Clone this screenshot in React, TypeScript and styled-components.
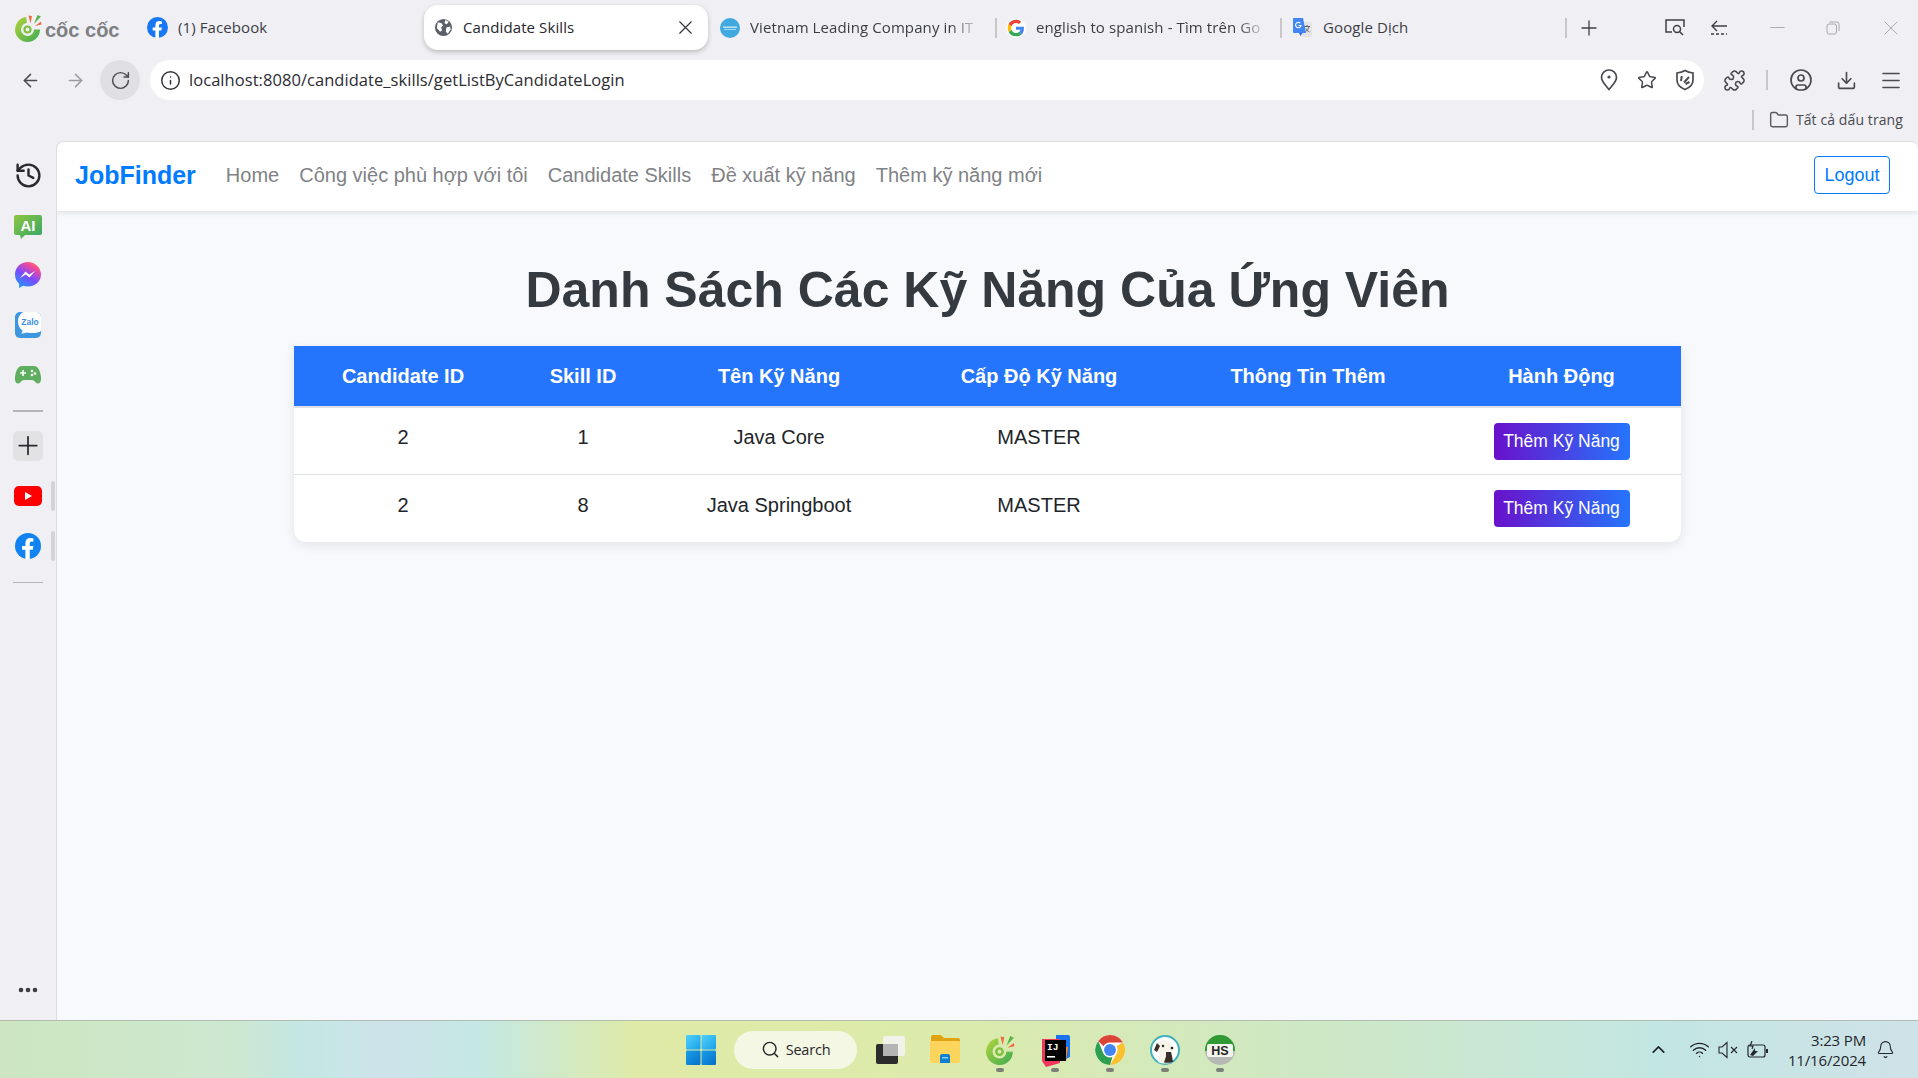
import React from "react";
import styled, { createGlobalStyle } from "styled-components";
import {
  ArrowLeft, ArrowRight, RotateCw, Info, Star, Puzzle, CircleUser, Download, Menu, Folder,
  Plus, X, Minus, History, Search, ChevronUp, Wifi, Bell, MoreHorizontal,
} from "lucide-react";

const GlobalStyle = createGlobalStyle`
  html, body { margin: 0; padding: 0; height: 100%; overflow: hidden; }
  body { font-family: "Liberation Sans", Arial, sans-serif; background: #efeff4; }
  * { box-sizing: border-box; }
`;

const chromeFont = `"Open Sans", "Noto Sans", sans-serif`;

const Screen = styled.div`
  width: 1918px;
  height: 1078px;
  display: flex;
  flex-direction: column;
  background: #efeff4;
  overflow: hidden;
`;

/* ---------- browser tab strip ---------- */
const TabStrip = styled.div`
  height: 55px;
  flex: none;
  display: flex;
  align-items: center;
  padding: 0 0 0 14px;
  font-family: ${chromeFont};
  font-size: 15px;
  letter-spacing: 0.1px;
  color: #3c3c44;
`;
const Brand = styled.div`
  width: 110px;
  display: flex;
  align-items: center;
  gap: 3px;
  flex: none;
`;
const BrandText = styled.span`
  font-family: "Liberation Sans", sans-serif;
  font-weight: 700;
  font-size: 20px;
  letter-spacing: 0;
  color: #7d7f82;
  white-space: nowrap;
  margin-top: 6px;
`;
const Tab = styled.div<{ $w: number; $ml?: number }>`
  width: ${(p) => p.$w}px;
  margin-left: ${(p) => p.$ml ?? 0}px;
  flex: none;
  height: 45px;
  display: flex;
  align-items: center;
  gap: 10px;
  white-space: nowrap;
`;
const ActiveTab = styled(Tab)`
  background: #fff;
  border-radius: 14px;
  padding: 0 11px 0 10px;
  color: #26262c;
  box-shadow: 0 2px 5px rgba(0, 0, 0, 0.22);
`;
const TabTitle = styled.span<{ $fade?: boolean }>`
  flex: ${(p) => (p.$fade ? "none" : 1)};
  margin-bottom: 2px;
  ${(p) =>
    p.$fade &&
    `-webkit-mask-image: linear-gradient(to right, #000 90%, rgba(0,0,0,0.25) 100%);
     mask-image: linear-gradient(to right, #000 90%, rgba(0,0,0,0.25) 100%);`}
`;
const TabSeparator = styled.div<{ $ml: number }>`
  width: 2px;
  height: 20px;
  flex: none;
  margin-left: ${(p) => p.$ml}px;
  background: #c6c6cb;
`;
const StripButton = styled.div<{ $ml: number; $dim?: boolean }>`
  width: 24px;
  height: 24px;
  flex: none;
  margin-left: ${(p) => p.$ml}px;
  display: flex;
  align-items: center;
  justify-content: center;
  color: ${(p) => (p.$dim ? "#a9a9ae" : "#3f3f46")};
`;

/* ---------- address toolbar ---------- */
const Toolbar = styled.div`
  height: 45px;
  flex: none;
  display: flex;
  align-items: flex-start;
  padding: 5px 0 0 10px;
`;
const NavButton = styled.div<{ $hover?: boolean; $muted?: boolean }>`
  width: 40px;
  height: 40px;
  margin-right: ${(p) => (p.$hover ? 10 : 5)}px;
  flex: none;
  display: flex;
  align-items: center;
  justify-content: center;
  border-radius: 50%;
  background: ${(p) => (p.$hover ? "#e0e0e4" : "transparent")};
  color: ${(p) => (p.$muted ? "#9a9aa0" : "#4a4a50")};
`;
const AddressBar = styled.div`
  width: 1554px;
  height: 40px;
  flex: none;
  display: flex;
  align-items: center;
  background: #fff;
  border-radius: 20px;
  padding: 0 0 0 10px;
  color: #33333a;
`;
const UrlText = styled.span`
  flex: 1;
  margin: 0 0 2px 8px;
  font-family: ${chromeFont};
  font-size: 16.5px;
  letter-spacing: 0.05px;
  color: #2c2c32;
`;
const BarIcon = styled.div<{ $w?: number }>`
  width: ${(p) => p.$w ?? 38}px;
  height: 40px;
  flex: none;
  display: flex;
  align-items: center;
  justify-content: center;
  color: #4a4a50;
`;
const ToolbarActions = styled.div`
  display: flex;
  align-items: center;
  height: 40px;
  margin-left: 11px;
`;
const ToolbarDivider = styled.div`
  width: 2px;
  height: 20px;
  background: #c6c6cb;
  margin: 0 21px 0 13px;
`;

/* ---------- bookmarks row ---------- */
const BookmarkRow = styled.div`
  height: 41px;
  flex: none;
  display: flex;
  align-items: center;
  justify-content: flex-end;
  padding: 0 15px 2px 0;
  gap: 7px;
  font-family: ${chromeFont};
  font-size: 14px;
  letter-spacing: 0.1px;
  color: #4a4a50;
`;
const BookmarkDivider = styled.div`
  width: 2px;
  height: 20px;
  background: #c6c6cb;
  margin-right: 8px;
`;

/* ---------- body ---------- */
const Main = styled.div`
  flex: 1;
  min-height: 0;
  display: flex;
`;
const Sidebar = styled.div`
  width: 56px;
  flex: none;
  display: flex;
  flex-direction: column;
  padding-top: 9px;
`;
const SideSlot = styled.div`
  position: relative;
  width: 56px;
  height: 50px;
  flex: none;
  display: flex;
  align-items: center;
  justify-content: center;
`;
const SidePip = styled.div`
  position: absolute;
  left: 51px;
  top: 10px;
  width: 4px;
  height: 30px;
  background: #d4d4d8;
  border-radius: 2px;
`;
const SideRule = styled.div<{ $mt: number; $mb: number }>`
  width: 30px;
  height: 1.5px;
  background: #b5b5b9;
  margin: ${(p) => p.$mt}px 0 ${(p) => p.$mb}px 13px;
  flex: none;
`;
const PlusBox = styled.div`
  width: 30px;
  height: 30px;
  border-radius: 5px;
  background: #e2e2e4;
  display: flex;
  align-items: center;
  justify-content: center;
  color: #2a2a2e;
`;
const SideBottom = styled.div`
  margin-top: auto;
  height: 50px;
  display: flex;
  align-items: center;
  justify-content: center;
  padding-bottom: 10px;
  color: #38383e;
`;
const Page = styled.div`
  flex: 1;
  min-width: 0;
  background: #f8f9fc;
  border-left: 1px solid #dcdce0;
  border-top: 1px solid #dcdce0;
  border-top-left-radius: 8px;
  border-top-right-radius: 8px;
  display: flex;
  flex-direction: column;
  overflow: hidden;
`;
const Navbar = styled.nav`
  height: 69px;
  flex: none;
  background: #fff;
  display: flex;
  align-items: center;
  padding: 0 28px 3px 18px;
  box-shadow: 0 2px 5px rgba(0, 0, 0, 0.1);
`;
const Logo = styled.a`
  font-size: 25px;
  font-weight: 700;
  color: #007bff;
  margin-right: 20px;
`;
const NavLink = styled.a`
  font-size: 20px;
  color: #808285;
  padding: 0 10px;
  white-space: nowrap;
`;
const LogoutButton = styled.button`
  margin-left: auto;
  width: 76px;
  height: 38px;
  background: #fff;
  border: 1px solid #007bff;
  border-radius: 4px;
  font: inherit;
  font-size: 18px;
  color: #007bff;
  padding: 0;
`;
const Content = styled.div`
  flex: 1;
  display: flex;
  flex-direction: column;
  align-items: center;
  padding: 50px 237px 0;
`;
const Title = styled.h1`
  margin: 0 0 27px;
  width: 100%;
  text-align: center;
  font-size: 50px;
  line-height: 58px;
  font-weight: 700;
  color: #343a40;
`;
const SkillsTable = styled.table`
  width: 1387px;
  table-layout: fixed;
  border-collapse: separate;
  border-spacing: 0;
  background: #fff;
  border-radius: 0 0 12px 12px;
  box-shadow: 0 3px 12px rgba(0, 0, 0, 0.09);
  text-align: center;
`;
const HeadCell = styled.th`
  height: 62px;
  background: #2575fc;
  border-bottom: 2px solid #dee2e6;
  color: #fff;
  font-size: 20px;
  font-weight: 700;
  padding: 0;
`;
const BodyCell = styled.td<{ $last?: boolean }>`
  height: 67px;
  border-bottom: ${(p) => (p.$last ? "none" : "1px solid #dee2e6")};
  font-size: 20px;
  color: #212529;
  padding: 0 0 7px;
  vertical-align: middle;
`;
const AddSkillButton = styled.button`
  width: 136px;
  height: 37px;
  margin-top: 7px;
  border: none;
  border-radius: 4px;
  background: linear-gradient(to right, #6a11cb, #2575fc);
  color: #fff;
  font: inherit;
  font-size: 17.5px;
  padding: 0;
`;

/* ---------- windows taskbar ---------- */
const Taskbar = styled.div`
  height: 58px;
  flex: none;
  display: flex;
  align-items: center;
  padding: 0 14px 0 686px;
  border-top: 1px solid #b1bdb0;
  background: linear-gradient(
    to right,
    #cde6c0 0,
    #cde8d0 230px,
    #c4e7e4 300px,
    #cde3ea 390px,
    #c4e8e4 480px,
    #dfeaa6 640px,
    #dcebac 950px,
    #cfe8c4 1300px,
    #c2e6e2 1660px,
    #cfe2e8 1918px
  );
`;
const StartButton = styled.div`
  width: 30px;
  height: 30px;
  flex: none;
`;
const SearchPill = styled.div`
  width: 123px;
  height: 38px;
  margin: 0 18px 0 18px;
  flex: none;
  border-radius: 19px;
  background: #f3f7e4;
  display: flex;
  align-items: center;
  justify-content: center;
  gap: 6px;
  font-family: ${chromeFont};
  font-size: 14.5px;
  letter-spacing: -0.2px;
  color: #27272b;
`;
const TaskIcon = styled.div<{ $running?: boolean }>`
  position: relative;
  width: 30px;
  height: 30px;
  margin-right: 25px;
  flex: none;
  &::after {
    content: "";
    display: ${(p) => (p.$running ? "block" : "none")};
    position: absolute;
    left: 11px;
    bottom: -7px;
    width: 8px;
    height: 4px;
    border-radius: 2px;
    background: #7b8078;
  }
`;
const Tray = styled.div`
  margin-left: auto;
  display: flex;
  align-items: center;
  color: #23262a;
`;
const TrayIcon = styled.div<{ $w: number; $ml?: number }>`
  width: ${(p) => p.$w}px;
  margin-left: ${(p) => p.$ml ?? 0}px;
  display: flex;
  align-items: center;
  justify-content: center;
`;
const Clock = styled.div`
  width: 92px;
  text-align: right;
  font-family: ${chromeFont};
  font-size: 15px;
  line-height: 20px;
  letter-spacing: -0.15px;
  color: #23262a;
`;

/* ---------- drawn logos ---------- */
const CocCocMark = ({ size = 28, id = "cc" }: { size?: number; id?: string }) => (
  <svg width={size} height={size} viewBox="0 0 28 28">
    <defs>
      <linearGradient id={id} x1="0" y1="0" x2="1" y2="1" gradientUnits="objectBoundingBox">
        <stop offset="0" stopColor="#a6cf3d" />
        <stop offset="1" stopColor="#4cb050" />
      </linearGradient>
    </defs>
    <path d="M23 15.500A9.500 9.500 0 1 1 12.500 6" fill="none" stroke={`url(#${id})`} strokeWidth="6" />
    <circle cx="13.500" cy="15.500" r="3" fill="none" stroke="#7fbf3f" strokeWidth="2.200" />
    <path d="M14.500 1.500l3.500.5-1.500 7.500z" fill="#f26b3a" />
    <path d="M23.500 1l3.500 1.500-7 7.500z" fill="#5bb649" />
    <path d="M27 7.500l.5 3-6.500 1.500z" fill="#f26b3a" />
  </svg>
);
const FacebookMark = ({ size = 22, c = "#1877f2" }: { size?: number; c?: string }) => (
  <svg width={size} height={size} viewBox="0 0 24 24">
    <circle cx="12" cy="12" r="12" fill={c} />
    <path d="M16.400 15.400l.6-3.400h-3.400V9.800c0-1 .5-1.900 2-1.900H17V5c-.9-.2-1.900-.3-2.800-.3-2.900 0-4.600 1.700-4.600 4.700V12H6.500v3.400h3.100V24h4v-8.600z" fill="#fff" />
  </svg>
);
const GlobeMark = () => (
  <svg width="19" height="19" viewBox="0 0 20 20">
    <circle cx="10" cy="10" r="9" fill="#5a5f68" />
    <path d="M4 4.500l4 1 1.500 2.500-2 2 1 3-2 1.500-3.500-4zM12 2l3.500 2-2 2.500-2.500-1zM13 10l4-1 .5 3-3 4.500-2-2z" fill="#fff" />
  </svg>
);
const VietnamMark = () => (
  <svg width="20" height="20" viewBox="0 0 20 20">
    <circle cx="10" cy="10" r="10" fill="#3fa9e0" />
    <rect x="3" y="8.500" width="14" height="1.500" fill="#bfe3f5" />
    <rect x="4" y="11" width="12" height="1" fill="#a5d6f0" />
  </svg>
);
const GoogleMark = () => (
  <svg width="20" height="20" viewBox="0 0 48 48">
    <circle cx="24" cy="24" r="24" fill="#fff" />
    <path fill="#4285f4" d="M43 24.500c0-1.500-.1-2.600-.4-3.800H24v7.300h10.800c-.5 2.600-2 4.700-4.300 6.200l6.600 5.100C41 36.700 43 31.100 43 24.500z" />
    <path fill="#34a853" d="M24 44c5.400 0 9.900-1.800 13.100-4.700l-6.600-5.100c-1.700 1.200-4 2-6.500 2-5.100 0-9.500-3.400-11-8.100l-6.800 5.300C9.500 39.700 16.200 44 24 44z" />
    <path fill="#fbbc05" d="M13 28.100c-.4-1.200-.6-2.600-.6-4.100s.2-2.900.6-4.100l-6.800-5.300C4.800 17.400 4 20.600 4 24s.8 6.600 2.200 9.400z" />
    <path fill="#ea4335" d="M24 11.800c3.100 0 5.300 1.300 6.900 2.800l5.700-5.600C33.900 6.100 29.400 4 24 4 16.200 4 9.500 8.300 6.200 14.600l6.800 5.300c1.500-4.700 5.900-8.100 11-8.100z" />
  </svg>
);
const TranslateMark = () => (
  <svg width="21" height="21" viewBox="0 0 21 21">
    <path d="M8 5h11a1 1 0 0 1 1 1v13a1 1 0 0 1-1 1H10z" fill="#e4e4e6" />
    <path d="M12 9.500h6M15 8v1.500M13 15c2-1 3.500-3 4-5.500M14 11.500c.6 1.400 1.800 2.800 3.500 3.500" stroke="#5f6368" strokeWidth="1" fill="none" />
    <path d="M1 1h10l3 15H2a1 1 0 0 1-1-1z" fill="#4285f4" />
    <path d="M8.300 6.200A2.700 2.700 0 1 0 9 8.500H6.600" stroke="#fff" strokeWidth="1.200" fill="none" />
    <path d="M7 16l1.500 3 2-3z" fill="#3367d6" />
  </svg>
);
const ScreenSearchIcon = () => (
  <svg width="22" height="20" viewBox="0 0 22 20" fill="none" stroke="#3f3f46" strokeWidth="1.500">
    <path d="M8 14H2V2h18v7" />
    <circle cx="13" cy="11" r="3.500" />
    <path d="M15.500 13.500L19 17" />
  </svg>
);
const TabBackIcon = () => (
  <svg width="18" height="18" viewBox="0 0 18 18" fill="none" stroke="#3f3f46" strokeWidth="1.400">
    <path d="M17 7H2M7 2L2 7l5 5" />
    <path d="M1 15h16" strokeDasharray="3 2" />
  </svg>
);
const RestoreIcon = () => (
  <svg width="14" height="14" viewBox="0 0 14 14" fill="none" stroke="#a9a9ae" strokeWidth="1">
    <rect x="1" y="3" width="9.500" height="10" rx="2" />
    <path d="M3.500 1h7.500a2 2 0 0 1 2 2v7" />
  </svg>
);
const ShieldIcon = () => (
  <svg width="20" height="22" viewBox="0 0 20 22" fill="none" stroke="#4a4a50" strokeWidth="1.700">
    <path d="M10 1.500c2.500 1.500 5 2.200 8 2.500v7c0 4.500-3.500 7.800-8 9.500-4.500-1.700-8-5-8-9.500V4c3-.3 5.500-1 8-2.500z" />
    <path d="M6 12l.8-5M9 13.500l5-5.500M10.500 15l4-2" strokeWidth="2" />
  </svg>
);
const PinIcon = () => (
  <svg width="18" height="22" viewBox="0 0 18 22" fill="none" stroke="#4a4a50" strokeWidth="1.700">
    <path d="M9 20.500C5 15.500 1.500 12.500 1.500 8.500a7.500 7.500 0 0 1 15 0c0 4-3.500 7-7.500 12z" />
    <circle cx="9" cy="8" r="1.600" fill="#4a4a50" stroke="none" />
  </svg>
);
const AiMark = () => (
  <svg width="28" height="28" viewBox="0 -4 28 28">
    <defs>
      <linearGradient id="ai" x1="0" y1="0" x2="1" y2="1">
        <stop offset="0" stopColor="#8fc540" />
        <stop offset="1" stopColor="#32a56a" />
      </linearGradient>
    </defs>
    <path d="M2 0h24a2 2 0 0 1 2 2v16a2 2 0 0 1-2 2H11l-4 4-1-4H2a2 2 0 0 1-2-2V2a2 2 0 0 1 2-2z" fill="url(#ai)" />
    <text x="14" y="15.500" textAnchor="middle" fontFamily="Liberation Sans" fontWeight="700" fontSize="15" fill="#fff">AI</text>
  </svg>
);
const MessengerMark = () => (
  <svg width="26" height="26" viewBox="0 0 26 26">
    <defs>
      <linearGradient id="ms" x1="0.2" y1="1" x2="0.8" y2="0">
        <stop offset="0" stopColor="#1a9bff" />
        <stop offset="0.45" stopColor="#7a4bff" />
        <stop offset="0.8" stopColor="#f0489c" />
        <stop offset="1" stopColor="#ff7a5c" />
      </linearGradient>
    </defs>
    <path d="M13 0C5.700 0 0 5.300 0 12.500c0 3.800 1.600 7 4.100 9.200V26l4-2.200c1.500.5 3.100.7 4.900.7 7.300 0 13-5.300 13-12S20.300 0 13 0z" fill="url(#ms)" />
    <path d="M5 16l5.500-6.500 3.700 3 5.800-3.500-5.500 6.500-3.700-3z" fill="#fff" />
  </svg>
);
const ZaloMark = () => (
  <svg width="26" height="26" viewBox="0 0 26 26">
    <rect width="26" height="26" rx="5" fill="#3d96e0" />
    <path d="M8 0h13a5 5 0 0 1 5 5v14c-2 1.500-5 2-8 2-3 0-5 0-7-.5-1 .8-3 1-5 1 .8-.8 1.500-2 1.500-3C4 16 3 12 3 9c0-4 2-7 5-9z" fill="#fff" />
    <text x="15" y="13" textAnchor="middle" fontFamily="Liberation Sans" fontWeight="700" fontSize="8.500" fill="#3d8fdc">Zalo</text>
  </svg>
);
const GameMark = () => (
  <svg width="26" height="18" viewBox="0 0 26 18">
    <path d="M7 0h12c4 0 6 4 7 11 .4 4-.8 6.500-3 6.500-2.400 0-3.500-3.500-6-3.500H9c-2.500 0-3.600 3.500-6 3.500C.8 17.500-.4 15 0 11 1 4 3 0 7 0z" fill="#5fae5f" />
    <path d="M5 7h6M8 4v6" stroke="#fff" strokeWidth="1.600" />
    <circle cx="17" cy="5" r="1.300" fill="#fff" />
    <circle cx="20" cy="7.500" r="1.300" fill="#fff" />
    <circle cx="17" cy="9" r="1.300" fill="#fff" />
  </svg>
);
const YoutubeMark = () => (
  <svg width="28" height="20" viewBox="0 0 28 20">
    <rect width="28" height="20" rx="5" fill="#f00" />
    <path d="M11 6l7 4-7 4z" fill="#fff" />
  </svg>
);
const WindowsMark = () => (
  <svg width="30" height="30" viewBox="0 0 30 30">
    <defs>
      <linearGradient id="w1" x1="0" y1="0" x2="1" y2="1">
        <stop offset="0" stopColor="#52d1fb" />
        <stop offset="1" stopColor="#1a9fe8" />
      </linearGradient>
      <linearGradient id="w2" x1="0" y1="0" x2="1" y2="1">
        <stop offset="0" stopColor="#1a9fe8" />
        <stop offset="1" stopColor="#0670c8" />
      </linearGradient>
    </defs>
    <rect x="0" y="0" width="14.500" height="14.500" rx="1" fill="url(#w1)" />
    <rect x="15.500" y="0" width="14.500" height="14.500" rx="1" fill="url(#w1)" />
    <rect x="0" y="15.500" width="14.500" height="14.500" rx="1" fill="url(#w2)" />
    <rect x="15.500" y="15.500" width="14.500" height="14.500" rx="1" fill="url(#w2)" />
  </svg>
);
const TaskViewMark = () => (
  <svg width="30" height="30" viewBox="0 0 30 30">
    <rect x="1" y="9" width="22" height="20" rx="2" fill="#2c2c2c" />
    <rect x="8" y="1" width="22" height="20" rx="2" fill="#f4f4f4" fillOpacity="0.85" />
    <rect x="8" y="9" width="15" height="12" fill="#b4b4b4" />
  </svg>
);
const FolderMark = () => (
  <svg width="30" height="28" viewBox="0 0 30 28">
    <path d="M1 2a2 2 0 0 1 2-2h8l3 3h14a2 2 0 0 1 2 2v4H1z" fill="#e0a410" />
    <path d="M1 6h28a1 1 0 0 1 1 1v19a2 2 0 0 1-2 2H2a2 2 0 0 1-2-2V7a1 1 0 0 1 1-1z" fill="#fdd55d" />
    <path d="M10 21a2 2 0 0 1 2-2h6a2 2 0 0 1 2 2v7H10z" fill="#0f7fd0" />
    <rect x="12" y="22" width="6" height="1.500" fill="#8fd0f5" />
  </svg>
);
const IntellijMark = () => (
  <svg width="30" height="32" viewBox="0 0 30 32">
    <path d="M16 0h12a2 2 0 0 1 2 2v20l-8 4-6-6z" fill="#1a74f0" />
    <path d="M2 4h18v24l-14 4-4-6z" fill="#f0365a" />
    <path d="M14 12h14l-2 14H12z" fill="#fb8a18" />
    <rect x="5" y="5" width="21" height="21" fill="#000" />
    <text x="7" y="15" fontFamily="Liberation Mono" fontWeight="700" fontSize="9.500" fill="#fff">IJ</text>
    <rect x="7" y="21" width="8" height="1.600" fill="#fff" />
  </svg>
);
const ChromeMark = () => (
  <svg width="30" height="30" viewBox="0 0 48 48">
    <circle cx="24" cy="24" r="24" fill="#fff" />
    <path d="M24 0a24 24 0 0 1 20.800 12H24a12 12 0 0 0-10.400 6L5.200 9.600A24 24 0 0 1 24 0z" fill="#db4437" />
    <path d="M44.800 12A24 24 0 0 1 24 48l10.400-18A12 12 0 0 0 34.400 18z" fill="#fbc02d" />
    <path d="M24 48A24 24 0 0 1 5.200 9.600L13.600 30A12 12 0 0 0 28 35.300z" fill="#2e9e4f" />
    <circle cx="24" cy="24" r="9.500" fill="#4285f4" />
  </svg>
);
const DogMark = () => (
  <svg width="30" height="30" viewBox="0 0 30 30">
    <circle cx="15" cy="15" r="14" fill="#fff" stroke="#3fb0bd" strokeWidth="2" />
    <path d="M8 7c3-3 8-3 11 0l3 4 2 4-3 1-2-1 1 7 3 5c-5 2-11 2-15 0l2-8-3-5z" fill="#f5f2ea" />
    <path d="M7 8l-3 7 3 2 3-6zM16 17l5 0 1 4 1 6c-3 1-6 1-9 .5l2-6z" fill="#3a2e28" />
    <circle cx="13" cy="11" r="1.200" fill="#222" />
    <circle cx="22" cy="13" r="1.300" fill="#222" />
  </svg>
);
const HsMark = () => (
  <svg width="30" height="30" viewBox="0 0 30 30">
    <circle cx="15" cy="15" r="15" fill="#b5b8b4" />
    <path d="M0 15a15 15 0 0 1 30 0v1H0z" fill="#2f9a32" />
    <rect x="2" y="9" width="26" height="13" rx="2" fill="#f5f5f0" />
    <text x="15" y="20" textAnchor="middle" fontFamily="Liberation Sans" fontWeight="700" fontSize="12.500" fill="#262626">HS</text>
  </svg>
);
const MuteIcon = () => (
  <svg width="20" height="18" viewBox="0 0 20 18" fill="none" stroke="#23262a" strokeWidth="1.100">
    <path d="M1 6h3l5-4.500v15L4 12H1z" />
    <path d="M13 6l6 6M19 6l-6 6" />
  </svg>
);
const BatteryIcon = () => (
  <svg width="22" height="18" viewBox="0 0 22 18" fill="none" stroke="#23262a" strokeWidth="1.200">
    <rect x="1" y="4" width="17" height="12" rx="2" />
    <rect x="19" y="8" width="2" height="4" fill="#23262a" stroke="none" />
    <path d="M3 14l5-7v3h3l-5 5z" fill="#23262a" stroke="none" />
    <path d="M5 0l-2 5h3l-1 3" />
  </svg>
);

const columns = [218, 142, 250, 270, 268, 239];
const headings = ["Candidate ID", "Skill ID", "Tên Kỹ Năng", "Cấp Độ Kỹ Năng", "Thông Tin Thêm", "Hành Động"];
const skills = [
  { candidateId: 2, skillId: 1, name: "Java Core", level: "MASTER", info: "" },
  { candidateId: 2, skillId: 8, name: "Java Springboot", level: "MASTER", info: "" },
];
const navLinks = ["Home", "Công việc phù hợp với tôi", "Candidate Skills", "Đề xuất kỹ năng", "Thêm kỹ năng mới"];

export default function App() {
  return (
    <Screen>
      <GlobalStyle />
      <TabStrip>
        <Brand>
          <CocCocMark />
          <BrandText>cốc cốc</BrandText>
        </Brand>
        <Tab $w={276} $ml={23}>
          <FacebookMark size={21} />
          <TabTitle>(1) Facebook</TabTitle>
        </Tab>
        <ActiveTab $w={284} $ml={1}>
          <GlobeMark />
          <TabTitle>Candidate Skills</TabTitle>
          <X size={23} strokeWidth={1.2} color="#33333a" />
        </ActiveTab>
        <Tab $w={276} $ml={12}>
          <VietnamMark />
          <TabTitle $fade>Vietnam Leading Company in IT</TabTitle>
        </Tab>
        <TabSeparator $ml={-1} />
        <Tab $w={260} $ml={9}>
          <GoogleMark />
          <TabTitle $fade>english to spanish - Tìm trên Go</TabTitle>
        </Tab>
        <TabSeparator $ml={14} />
        <Tab $w={200} $ml={10}>
          <TranslateMark />
          <TabTitle>Google Dịch</TabTitle>
        </Tab>
        <TabSeparator $ml={73} />
        <StripButton $ml={10}>
          <Plus size={26} strokeWidth={1.3} />
        </StripButton>
        <StripButton $ml={62}>
          <ScreenSearchIcon />
        </StripButton>
        <StripButton $ml={20}>
          <TabBackIcon />
        </StripButton>
        <StripButton $ml={34} $dim>
          <Minus size={23} strokeWidth={1} />
        </StripButton>
        <StripButton $ml={32}>
          <RestoreIcon />
        </StripButton>
        <StripButton $ml={34} $dim>
          <X size={26} strokeWidth={1} />
        </StripButton>
      </TabStrip>

      <Toolbar>
        <NavButton>
          <ArrowLeft size={21} strokeWidth={1.7} />
        </NavButton>
        <NavButton $muted>
          <ArrowRight size={21} strokeWidth={1.7} />
        </NavButton>
        <NavButton $hover>
          <RotateCw size={21} strokeWidth={1.7} />
        </NavButton>
        <AddressBar>
          <Info size={21} strokeWidth={1.7} />
          <UrlText>localhost:8080/candidate_skills/getListByCandidateLogin</UrlText>
          <BarIcon>
            <PinIcon />
          </BarIcon>
          <BarIcon>
            <Star size={20} strokeWidth={1.8} />
          </BarIcon>
          <BarIcon>
            <ShieldIcon />
          </BarIcon>
        </AddressBar>
        <ToolbarActions>
          <BarIcon $w={38}>
            <Puzzle size={23} strokeWidth={1.6} />
          </BarIcon>
          <ToolbarDivider />
          <BarIcon $w={24}>
            <CircleUser size={24} strokeWidth={1.7} />
          </BarIcon>
          <BarIcon $w={66}>
            <Download size={21} strokeWidth={1.9} />
          </BarIcon>
          <BarIcon $w={24}>
            <Menu size={27} strokeWidth={1.6} />
          </BarIcon>
        </ToolbarActions>
      </Toolbar>

      <BookmarkRow>
        <BookmarkDivider />
        <Folder size={20} strokeWidth={1.7} color="#5a5a60" />
        <span>Tất cả dấu trang</span>
      </BookmarkRow>

      <Main>
        <Sidebar>
          <SideSlot>
            <History size={29} strokeWidth={2} color="#2a2a2e" />
          </SideSlot>
          <SideSlot>
            <AiMark />
          </SideSlot>
          <SideSlot>
            <MessengerMark />
          </SideSlot>
          <SideSlot>
            <ZaloMark />
          </SideSlot>
          <SideSlot>
            <GameMark />
          </SideSlot>
          <SideRule $mt={10} $mb={9} />
          <SideSlot>
            <PlusBox>
              <Plus size={37} strokeWidth={1.4} />
            </PlusBox>
          </SideSlot>
          <SideSlot>
            <YoutubeMark />
            <SidePip />
          </SideSlot>
          <SideSlot>
            <FacebookMark size={26} c="#1183f0" />
            <SidePip />
          </SideSlot>
          <SideRule $mt={11} $mb={0} />
          <SideBottom>
            <MoreHorizontal size={24} strokeWidth={2.6} />
          </SideBottom>
        </Sidebar>

        <Page>
          <Navbar>
            <Logo>JobFinder</Logo>
            {navLinks.map((link) => (
              <NavLink key={link}>{link}</NavLink>
            ))}
            <LogoutButton>Logout</LogoutButton>
          </Navbar>
          <Content>
            <Title>Danh Sách Các Kỹ Năng Của Ứng Viên</Title>
            <SkillsTable>
              <colgroup>
                {columns.map((w, i) => (
                  <col key={i} width={w} />
                ))}
              </colgroup>
              <thead>
                <tr>
                  {headings.map((h) => (
                    <HeadCell key={h}>{h}</HeadCell>
                  ))}
                </tr>
              </thead>
              <tbody>
                {skills.map((s, i) => {
                  const last = i === skills.length - 1;
                  return (
                    <tr key={s.skillId}>
                      <BodyCell $last={last}>{s.candidateId}</BodyCell>
                      <BodyCell $last={last}>{s.skillId}</BodyCell>
                      <BodyCell $last={last}>{s.name}</BodyCell>
                      <BodyCell $last={last}>{s.level}</BodyCell>
                      <BodyCell $last={last}>{s.info}</BodyCell>
                      <BodyCell $last={last}>
                        <AddSkillButton>Thêm Kỹ Năng</AddSkillButton>
                      </BodyCell>
                    </tr>
                  );
                })}
              </tbody>
            </SkillsTable>
          </Content>
        </Page>
      </Main>

      <Taskbar>
        <StartButton>
          <WindowsMark />
        </StartButton>
        <SearchPill>
          <Search size={19} strokeWidth={1.8} />
          Search
        </SearchPill>
        <TaskIcon>
          <TaskViewMark />
        </TaskIcon>
        <TaskIcon>
          <FolderMark />
        </TaskIcon>
        <TaskIcon $running>
          <CocCocMark size={30} id="cc2" />
        </TaskIcon>
        <TaskIcon $running>
          <IntellijMark />
        </TaskIcon>
        <TaskIcon $running>
          <ChromeMark />
        </TaskIcon>
        <TaskIcon $running>
          <DogMark />
        </TaskIcon>
        <TaskIcon $running>
          <HsMark />
        </TaskIcon>
        <Tray>
          <TrayIcon $w={24}>
            <ChevronUp size={21} strokeWidth={2} />
          </TrayIcon>
          <TrayIcon $w={30} $ml={14}>
            <Wifi size={21} strokeWidth={1.6} />
          </TrayIcon>
          <TrayIcon $w={28}>
            <MuteIcon />
          </TrayIcon>
          <TrayIcon $w={32}>
            <BatteryIcon />
          </TrayIcon>
          <Clock>
            3:23 PM
            <br />
            11/16/2024
          </Clock>
          <TrayIcon $w={38}>
            <Bell size={19} strokeWidth={1.4} />
          </TrayIcon>
        </Tray>
      </Taskbar>
    </Screen>
  );
}
